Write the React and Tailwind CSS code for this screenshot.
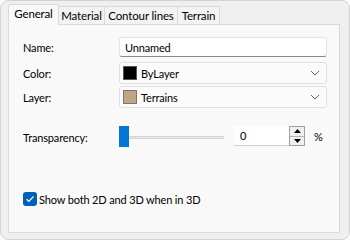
import React from "react";

function Chevron() {
  return (
    <svg width="10" height="6" viewBox="0 0 10 6" className="shrink-0">
      <path d="M1 1 L5 5 L9 1" fill="none" stroke="#6b6b6b" strokeWidth="1" />
    </svg>
  );
}

export default function App() {
  const font = { fontFamily: 'Lato, "Liberation Sans", sans-serif' };
  return (
    <div
      className="w-[350px] h-[240px] box-border bg-[#efefef] rounded-[8px] border border-[#d3d3d3] flex flex-col text-[11px] tracking-[-0.15px] text-black leading-none overflow-hidden whitespace-nowrap"
      style={font}
    >
      <div className="flex items-end h-[23px] pl-[7px]">
        <div className="relative z-10 w-[51px] h-[21px] -mb-px box-border border border-b-0 border-[#d9d9d9] bg-[#f9f9f9] rounded-t-[3px] flex items-center justify-center pb-[2px] text-[11.5px]">
          General
        </div>
        <div className="-ml-px w-[47px] h-[18px] box-border border border-b-0 border-[#d9d9d9] bg-[#f3f3f3] flex items-center justify-center text-[11.5px]">
          Material
        </div>
        <div className="-ml-px w-[74px] h-[18px] box-border border border-b-0 border-[#d9d9d9] bg-[#f3f3f3] flex items-center justify-center text-[11.5px]">
          Contour lines
        </div>
        <div className="-ml-px w-[43px] h-[18px] box-border border border-b-0 border-[#d9d9d9] bg-[#f3f3f3] flex items-center justify-center text-[11.5px]">
          Terrain
        </div>
      </div>
      <div className="ml-[7px] w-[332px] h-[209px] box-border border border-[#dadada] bg-[#f9f9f9] pl-[14px] pr-[12px] pt-[12px] flex flex-col">
        <div className="flex items-center h-[20px]">
          <div className="w-[96px]">Name:</div>
          <div className="flex-1 h-[20px] box-border bg-white border border-[#e3e3e3] border-b-[#8a8a8a] rounded-[3px] flex items-center pl-[5px]">
            Unnamed
          </div>
        </div>
        <div className="flex items-center h-[22px] mt-[5px]">
          <div className="w-[96px]">Color:</div>
          <div className="flex-1 h-[22px] box-border bg-[#fbfbfb] border border-[#e0e0e0] rounded-[3px] flex items-center pl-[3px] pr-[6px]">
            <div className="w-[14px] h-[14px] box-border bg-black border border-[#555]" />
            <div className="ml-[4px] flex-1">ByLayer</div>
            <Chevron />
          </div>
        </div>
        <div className="flex items-center h-[22px] mt-[2px]">
          <div className="w-[96px]">Layer:</div>
          <div className="flex-1 h-[22px] box-border bg-[#fbfbfb] border border-[#e0e0e0] rounded-[3px] flex items-center pl-[3px] pr-[6px]">
            <div className="w-[14px] h-[14px] box-border bg-[#c3a583] border border-[#777]" />
            <div className="ml-[4px] flex-1">Terrains</div>
            <Chevron />
          </div>
        </div>
        <div className="flex items-center h-[22px] mt-[18px]">
          <div className="w-[96px]">Transparency:</div>
          <div className="relative w-[105px] h-[22px] flex items-center">
            <div className="w-full h-[3px] bg-[#e6e6e6] border-y border-[#d6d6d6]" />
            <div className="absolute left-0 top-0 w-[10px] h-[21px] bg-[#0078d4]" />
          </div>
          <div className="ml-[10px] flex items-center h-[20px] -mt-[2px]">
            <div className="w-[55px] h-[20px] box-border bg-white border-b border-[#d0d0d0] flex items-center pl-[6px]">
              0
            </div>
            <div className="w-[16px] h-[20px] box-border border border-[#a0a0a0] bg-[#f0f0f0] flex flex-col">
              <div className="flex-1 flex items-center justify-center border-b border-[#b5b5b5]">
                <svg width="7" height="4" viewBox="0 0 7 4"><path d="M0 4 L3.5 0 L7 4Z" fill="#000" /></svg>
              </div>
              <div className="flex-1 flex items-center justify-center">
                <svg width="7" height="4" viewBox="0 0 7 4"><path d="M0 0 L3.5 4 L7 0Z" fill="#000" /></svg>
              </div>
            </div>
            <div className="ml-[9px]">%</div>
          </div>
        </div>
        <div className="flex items-center mt-[44px] h-[14px]">
          <div className="w-[14px] h-[14px] rounded-[3px] bg-[#005fb8] flex items-center justify-center">
            <svg width="10" height="8" viewBox="0 0 10 8">
              <path d="M1.5 4.2 L3.8 6.3 L8.5 1.5" fill="none" stroke="white" strokeWidth="1.2" />
            </svg>
          </div>
          <div className="ml-[2px]">Show both 2D and 3D when in 3D</div>
        </div>
      </div>
    </div>
  );
}
